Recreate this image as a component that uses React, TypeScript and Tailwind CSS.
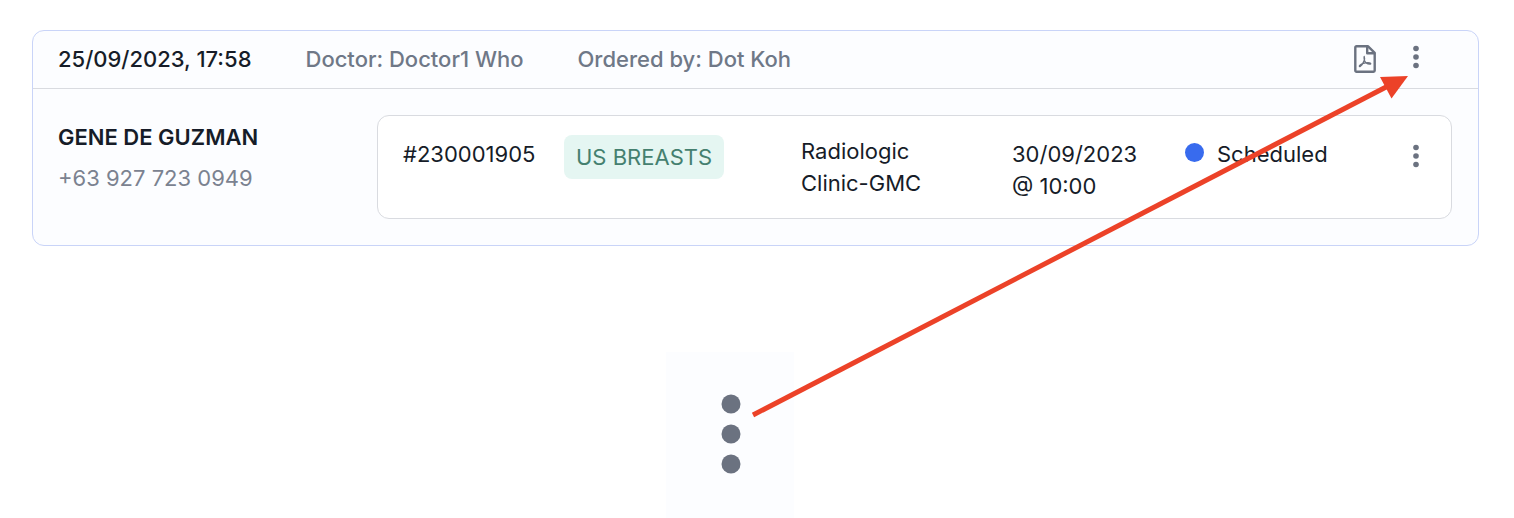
import { useState } from "react";

interface Appointment {
  id: string;
  procedure: string;
  clinic: string[];
  date: string;
  time: string;
  status: string;
}

const order = {
  createdAt: "25/09/2023, 17:58",
  doctor: "Doctor1 Who",
  orderedBy: "Dot Koh",
  patient: "GENE DE GUZMAN",
  phone: "+63 927 723 0949",
};

const appointments: Appointment[] = [
  {
    id: "#230001905",
    procedure: "US BREASTS",
    clinic: ["Radiologic", "Clinic-GMC"],
    date: "30/09/2023",
    time: "@ 10:00",
    status: "Scheduled",
  },
];

function KebabIcon({ className }: { className: string }) {
  return (
    <svg viewBox="0 0 20 80" className={className} fill="currentColor" aria-hidden="true">
      <circle cx="10" cy="10" r="9.5" />
      <circle cx="10" cy="40" r="9.5" />
      <circle cx="10" cy="70" r="9.5" />
    </svg>
  );
}

function SmallKebabIcon() {
  return (
    <svg viewBox="0 0 6 24" className="h-6 w-1.5" fill="currentColor" aria-hidden="true">
      <circle cx="3" cy="3.5" r="2.8" />
      <circle cx="3" cy="12" r="2.8" />
      <circle cx="3" cy="20.5" r="2.8" />
    </svg>
  );
}

function PdfIcon() {
  return (
    <svg
      viewBox="0 0 22 28"
      className="h-7 w-[22px]"
      fill="none"
      stroke="currentColor"
      strokeLinejoin="round"
      strokeLinecap="round"
      aria-hidden="true"
    >
      <path
        d="M2.5 1.3h11.6l6.6 6.6v17.6a1.2 1.2 0 0 1-1.2 1.2h-17a1.2 1.2 0 0 1-1.2-1.2v-23a1.2 1.2 0 0 1 1.2-1.2z"
        strokeWidth="2.4"
      />
      <path d="M13.2 1.6v6.6h7" strokeWidth="2.4" />
      <path
        d="M10.2 11.4c.6 1.6.4 3-.1 4.3-.9 2.3-2.2 4.600-3.900 5.800-.5.3-1-.1-.8-.6.800-1.500 3.600-2.700 6.300-3.100 2-.3 4-.2 4.900.5.4.5-.1 1-.9.900-2.200-.2-4.300-1.700-5.200-3.800-.500-1.300-.700-2.700-.300-4z"
        strokeWidth="1.3"
      />
    </svg>
  );
}

export default function App() {
  const [menuOpen, setMenuOpen] = useState(false);

  return (
    <div className="relative overflow-hidden bg-white pt-[30px] font-['Inter',sans-serif] text-[22px] leading-8 text-[#161c28]">
      <section className="ml-8 mr-[35px] rounded-xl border border-[#c9d4f8] bg-[#fcfdff]">
        <header className="flex h-[58px] items-center gap-[54px] border-b border-[#d9dbe0] pb-0.5 pl-[25px] pr-[42px] font-medium">
          <h2>{order.createdAt}</h2>
          <p className="text-[#6f7887]">Doctor: {order.doctor}</p>
          <p className="text-[#6f7887]">Ordered by: {order.orderedBy}</p>
          <div className="ml-auto flex items-center gap-[11px] text-[#6b7280]">
            <button type="button" aria-label="Download PDF" className="flex w-10 justify-center">
              <PdfIcon />
            </button>
            <button
              type="button"
              aria-label="Order actions"
              aria-expanded={menuOpen}
              onClick={() => setMenuOpen(!menuOpen)}
              className="flex w-10 justify-center pb-1"
            >
              <SmallKebabIcon />
            </button>
          </div>
        </header>

        <div className="grid grid-cols-[319fr_1075fr] py-[26px] pl-[25px] pr-[26px]">
          <div className="pt-1.5">
            <h3 className="mb-[9px] font-semibold">{order.patient}</h3>
            <p className="text-[#7b8290]">{order.phone}</p>
          </div>

          {appointments.map((item) => (
            <article
              key={item.id}
              className="grid grid-cols-[161fr_237fr_211fr_173fr_211fr_40fr] items-start rounded-xl border border-[#d9dbe0] bg-white pb-4 pl-[25px] pr-[15px] pt-[19px]"
            >
              <p className="pt-[3px]">{item.id}</p>
              <div className="flex">
                <span className="rounded-lg bg-[#e5f6f2] px-3 py-1.5 text-[#44806f]">
                  {item.procedure}
                </span>
              </div>
              <p>
                {item.clinic.map((line) => (
                  <span key={line} className="block">{line}</span>
                ))}
              </p>
              <p className="pt-[3px]">
                <span className="block">{item.date}</span>
                <span className="block">{item.time}</span>
              </p>
              <p className="flex items-center gap-[13px] pt-[3px]">
                <span className="mb-1 size-[19px] rounded-full bg-[#386bee]" />
                {item.status}
              </p>
              <button
                type="button"
                aria-label="Appointment actions"
                className="flex justify-center pt-[9px] text-[#6b7280]"
              >
                <SmallKebabIcon />
              </button>
            </article>
          ))}
        </div>
      </section>

      {/* Enlarged menu icon */}
      <div className="ml-[44%] mt-[106px] flex h-[166px] w-32 justify-center bg-[#fcfdff] pl-0.5 pt-[42px] text-[#6b7280]">
        <KebabIcon className="h-20 w-5" />
      </div>

      {/* Arrow pointing at the order menu */}
      <svg viewBox="0 0 1514 518" className="pointer-events-none absolute left-0 top-0 h-auto w-full" aria-hidden="true">
        <path d="M753 415L1390 85" stroke="#ec4228" strokeWidth="5" />
        <path d="M1408 76L1380 77L1391.5 98.5Z" fill="#ec4228" />
      </svg>
    </div>
  );
}
